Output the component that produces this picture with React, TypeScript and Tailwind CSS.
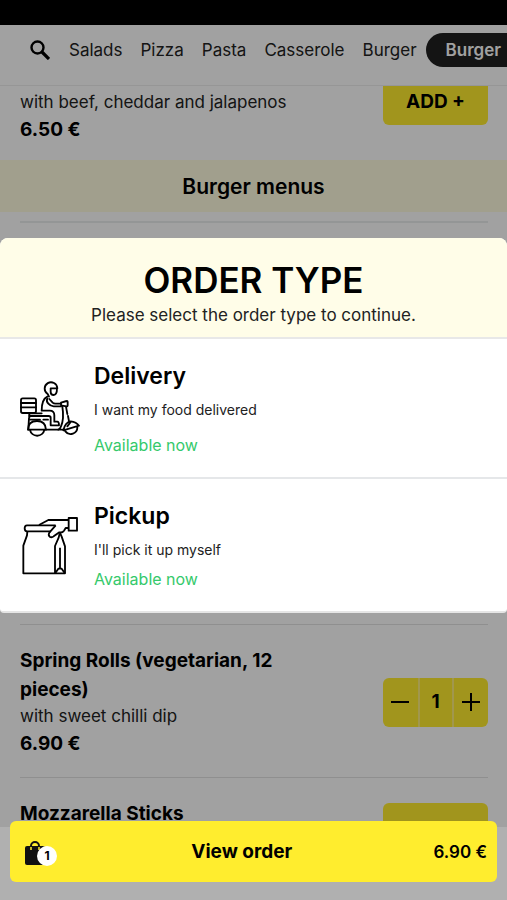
import type { ReactNode } from "react"

const categories = ["Salads", "Pizza", "Pasta", "Casserole", "Burger"]

const orderTypes = [
  {
    name: "Delivery",
    text: "I want my food delivered",
    status: "Available now",
    statusClass: "mt-[11px]",
    icon: <ScooterIcon />,
  },
  {
    name: "Pickup",
    text: "I'll pick it up myself",
    status: "Available now",
    statusClass: "mt-[5px]",
    icon: <PaperBagIcon />,
  },
]

function SearchIcon() {
  return (
    <svg viewBox="0 0 20 20" className="size-5" fill="none" stroke="currentColor">
      <circle cx="7.5" cy="7.5" r="6" strokeWidth="2.4" />
      <path d="M12 12l7 7" strokeWidth="3.2" />
    </svg>
  )
}

function ScooterIcon() {
  return (
    <svg
      viewBox="27 27 183 171"
      className="w-[61px] shrink-0"
      fill="none"
      stroke="currentColor"
      strokeWidth="5.5"
      strokeLinecap="round"
      strokeLinejoin="round"
    >
      {/* box */}
      <rect x="33" y="82" width="45" height="44" rx="5" />
      <path d="M33 96h45M33 109h45" />
      {/* rider */}
      <path d="M113 69a19 19 0 1 1 29-17h-20v11q0 9 9 9 10 0 10-20M113 69l4 8" />
      <path d="M112 77q-17 8-17 42h24q14 0 14 14v19h9q5 0 5 11h-25v-23q0-5-6-5H58" />
      <path d="M112 83q-4 8 3 15 7 8 16 8h22M118 84l10 11q3 3 8 3h17" />
      {/* handlebar */}
      <path d="M153 95l17-5q3-1 3 3v10q0 4-4 3l-16-3z" />
      <path d="M157 106q6 38-4 60-2 8-8 10M168 107l4 22M174 135l3 16" />
      {/* body */}
      <path d="M55 127h40M58 127v14M62 146h28M100 146h14M106 176h57M57 141l-2 35" />
      <path d="M54 176q0-26 27-26 26 0 27 26zM60 177a22 22 0 0 0 43 0" />
      <path d="M160 178q5-24 22-27 17 2 25 13zM166 181a20 20 0 0 0 36-13M172 166l10-13" />
    </svg>
  )
}

function PaperBagIcon() {
  return (
    <svg
      viewBox="27 27 183 183"
      className="w-[61px] shrink-0"
      fill="none"
      stroke="currentColor"
      strokeWidth="5.5"
      strokeLinejoin="round"
    >
      <path d="M137 58H51q-7 0-7 9t7 9h72" />
      <path d="M52 77l-1 11-11 31v83h125v-81l-10-29-5-11" />
      <path d="M149 82l-3 13-11 25v82M150 125v62M136 201l9-13h10l9 13" />
      <path d="M87 57l28-15h60M137 58l-19 22q-4 7 1 12 6 4 12-1l17-12q9 2 14-5l5-8h9" />
      <rect x="176" y="36" width="25" height="38" />
    </svg>
  )
}

function BagIcon() {
  return (
    <svg viewBox="0 0 22 26" className="w-[22px]">
      <path d="M6 9V6a4 4 0 0 1 8 0v3" fill="none" stroke="#111" strokeWidth="2" />
      <path d="M2 6h16q2 0 2 2v15q0 2-2 2H2q-2 0-2-2V8q0-2 2-2z" fill="#111" />
      <path d="M6 7v3M14 7v3" stroke="#ffed2e" strokeWidth="1.5" />
    </svg>
  )
}

function AddButton({ className = "" }: { className?: string }) {
  return (
    <button
      type="button"
      className={`h-[49px] w-[105px] shrink-0 rounded-md bg-[#ffed2e] pt-1 text-[19px] font-bold ${className}`}
    >
      ADD +
    </button>
  )
}

function Row({ children }: { children: ReactNode }) {
  return (
    <div className="mr-[19px] ml-5 flex items-center justify-between border-t border-[#e2e2e2] pt-[21px] pb-[19px]">
      {children}
    </div>
  )
}

function Menu() {
  return (
    <main className="min-h-0 flex-1 overflow-hidden">
      <div className="mr-[19px] ml-5 flex items-start justify-between pt-1 pb-4">
        <div>
          <p className="text-[17px] leading-[25px] text-[#222]">with beef, cheddar and jalapenos</p>
          <p className="text-[19px] leading-[29px] font-bold">6.50 €</p>
        </div>
        <AddButton className="-mt-[14px]" />
      </div>
      <h2 className="bg-[#fffce0] pt-0.5 text-center text-[21px] leading-[50px] font-semibold">
        Burger menus
      </h2>
      <div className="mt-[9px] mr-[19px] ml-5 h-[403px] border-t-2 border-[#ebeeee]" />
      <Row>
        <div className="w-[280px]">
          <h3 className="text-[19px] leading-[29px] font-bold">Spring Rolls (vegetarian, 12 pieces)</h3>
          <p className="text-[17px] leading-[25px] text-[#222]">with sweet chilli dip</p>
          <p className="text-[19px] leading-[29px] font-bold">6.90 €</p>
        </div>
        <div className="flex h-[49px] w-[105px] shrink-0 divide-x-2 divide-[#fff07a] overflow-hidden rounded-md bg-[#ffed2e]">
          <button type="button" aria-label="Remove one" className="flex flex-1 items-center justify-center">
            <svg viewBox="0 0 18 18" className="size-[18px]" stroke="currentColor" strokeWidth="2">
              <path d="M0 9h18" />
            </svg>
          </button>
          <span className="flex w-[34px] items-center justify-center text-[19px] font-bold">1</span>
          <button type="button" aria-label="Add one" className="flex flex-1 items-center justify-center">
            <svg viewBox="0 0 18 18" className="size-[18px]" stroke="currentColor" strokeWidth="2">
              <path d="M0 9h18M9 0v18" />
            </svg>
          </button>
        </div>
      </Row>
      <Row>
        <h3 className="self-start text-[19px] leading-[29px] font-bold">Mozzarella Sticks</h3>
        <AddButton className="my-1" />
      </Row>
    </main>
  )
}

function OrderTypeDialog() {
  return (
    <div
      role="dialog"
      aria-labelledby="order-type-title"
      className="w-full overflow-hidden rounded-t-lg rounded-b-sm border-b-2 border-[#e5e5e5] bg-white"
    >
      <div className="border-b-2 border-[#e8e8e8] bg-[#fffde8] pt-[19px] pb-2.5 text-center">
        <h1 id="order-type-title" className="text-[35px] leading-[46px] font-semibold">
          ORDER TYPE
        </h1>
        <p className="text-[17px] leading-6 text-[#222]">Please select the order type to continue.</p>
      </div>
      <div className="divide-y-2 divide-[#e5e7e9]">
        {orderTypes.map((type) => (
          <button
            key={type.name}
            type="button"
            className="flex w-full items-center gap-[14px] pt-[21px] pr-5 pb-5 pl-[19px] text-left"
          >
            {type.icon}
            <span className="flex flex-col">
              <span className="text-[23px] leading-8 font-semibold">{type.name}</span>
              <span className="mt-1.5 text-sm leading-6 text-[#222]">{type.text}</span>
              <span className={`text-base leading-6 text-[#35c96b] ${type.statusClass}`}>
                {type.status}
              </span>
            </span>
          </button>
        ))}
      </div>
    </div>
  )
}

export default function App() {
  return (
    <div className="relative flex h-screen flex-col overflow-hidden bg-white font-['Inter',sans-serif] text-black">
      <div className="h-[25px] shrink-0 bg-black" />
      <header className="flex h-[61px] shrink-0 overflow-hidden border-b border-[#eeeeee] pt-2 pl-[30px]">
        <button type="button" aria-label="Search" className="mr-2.5 flex h-[34px] items-center">
          <SearchIcon />
        </button>
        <nav className="flex text-[17px] leading-[34px] whitespace-nowrap text-[#222]">
          {categories.map((category) => (
            <a key={category} href="#" className="px-[9px]">
              {category}
            </a>
          ))}
          <a href="#" className="h-[34px] rounded-full bg-[#202020] pr-10 pl-5 font-semibold text-white">
            Burger
          </a>
        </nav>
      </header>
      <Menu />

      <div className="absolute inset-0 flex flex-col bg-black/37">
        <div className="flex flex-1 items-center pt-[25px] pb-px">
          <OrderTypeDialog />
        </div>
        <footer className="h-[73px] bg-[#b0b0b0] px-2.5">
          <button
            type="button"
            className="relative -mt-1.5 flex h-[61px] w-full items-center justify-between rounded-md bg-[#ffed2e] pt-0.5 pr-2.5 pl-[15px]"
          >
            <span className="relative w-[25px]">
              <BagIcon />
              <span className="absolute top-1.5 left-3 flex size-5 items-center justify-center rounded-full bg-white text-xs font-bold">
                1
              </span>
            </span>
            <span className="text-[19px] font-bold">View order</span>
            <span className="text-[17px] font-semibold">6.90 €</span>
          </button>
        </footer>
      </div>
    </div>
  )
}
